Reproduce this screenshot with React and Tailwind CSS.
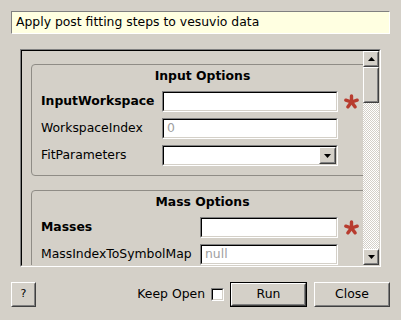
import React from "react";

const Sunken = ({ className = "", children }) => (
  <div className={`border border-t-[#808080] border-l-[#808080] border-b-white border-r-white ${className}`}>
    <div className="h-full border border-t-[#000] border-l-[#000] border-b-[#d4d0c8] border-r-[#d4d0c8] bg-white flex items-center">
      {children}
    </div>
  </div>
);

const Raised = ({ className = "", children }) => (
  <div className={`border border-t-white border-l-white border-b-[#404040] border-r-[#404040] ${className}`}>
    <div className="h-full border border-t-[#d4d0c8] border-l-[#d4d0c8] border-b-[#808080] border-r-[#808080] bg-[#d4d0c8] flex items-center justify-center">
      {children}
    </div>
  </div>
);

const Arrow = ({ up }) => (
  <svg width="7" height="4" viewBox="0 0 7 4">
    <path d={up ? "M0 4 L3.5 0 L7 4 Z" : "M0 0 L7 0 L3.5 4 Z"} fill="#000" />
  </svg>
);

const Required = () => (
  <svg width="17" height="15" viewBox="0 0 17 15" className="ml-[5px] shrink-0">
    <g stroke="#b83c2f" strokeWidth="3.4" strokeLinecap="round">
      <line x1="8.5" y1="8" x2="8.5" y2="2" />
      <line x1="8.5" y1="8" x2="14.2" y2="6.15" />
      <line x1="8.5" y1="8" x2="12" y2="12.85" />
      <line x1="8.5" y1="8" x2="5" y2="12.85" />
      <line x1="8.5" y1="8" x2="2.8" y2="6.15" />
    </g>
  </svg>
);

const Row = ({ label, bold, labelW, inputW, placeholder, combo, required }) => (
  <div className="flex items-center h-[21px]">
    <div className={`shrink-0 ${labelW} ${bold ? "font-bold" : ""}`}>{label}</div>
    {combo ? (
      <Sunken className={`${inputW} h-[21px] shrink-0`}>
        <div className="flex-1" />
        <Raised className="w-[17px] h-full">
          <Arrow />
        </Raised>
      </Sunken>
    ) : (
      <Sunken className={`${inputW} h-[21px] shrink-0`}>
        <span className="pl-[3px] text-[#a0a0a0]">{placeholder}</span>
      </Sunken>
    )}
    {required && <Required />}
  </div>
);

const Group = ({ title, children }) => (
  <div className="w-[343px] shrink-0 border border-[#8f8c86] rounded-[4px] pt-[4px] pb-[9px]">
    <div className="text-center font-bold leading-[14px]">{title}</div>
    <div className="mt-[8px] pl-[9px] flex flex-col gap-[6px]">{children}</div>
  </div>
);

export default function App() {
  return (
    <div className="w-[401px] h-[320px] bg-[#d4d0c8] flex flex-col px-[11px] pt-[11px] text-[12.4px] text-black font-['DejaVu_Sans',sans-serif] overflow-hidden">
      <div className="h-[23px] border border-t-[#808080] border-l-[#808080] border-b-white border-r-white bg-[#ffffe1] px-[4px] flex items-center">
        Apply post fitting steps to vesuvio data
      </div>

      <div className="mt-[15px] ml-[9px] w-[361px] h-[218px] border border-t-[#808080] border-l-[#808080] border-b-white border-r-white">
        <div className="h-full flex border border-t-[#000] border-l-[#000] border-b-[#d4d0c8] border-r-[#d4d0c8]">
          <div className="flex-1 overflow-hidden pl-[9px] pt-[13px] flex flex-col gap-[14px]">
            <Group title="Input Options">
              <Row label="InputWorkspace" bold labelW="w-[121px]" inputW="w-[176px]" required />
              <Row label="WorkspaceIndex" labelW="w-[121px]" inputW="w-[176px]" placeholder="0" />
              <Row label="FitParameters" labelW="w-[121px]" inputW="w-[176px]" combo />
            </Group>
            <Group title="Mass Options">
              <Row label="Masses" bold labelW="w-[159px]" inputW="w-[138px]" required />
              <Row label="MassIndexToSymbolMap" labelW="w-[159px]" inputW="w-[138px]" placeholder="null" />
            </Group>
          </div>
          <div className="w-[16px] shrink-0 flex flex-col">
            <Raised className="h-[16px]">
              <Arrow up />
            </Raised>
            <Raised className="h-[36px]" />
            <div className="flex-1 bg-[repeating-conic-gradient(#ffffff_0%_25%,#d4d0c8_0%_50%)] bg-[length:2px_2px]" />
            <Raised className="h-[16px]">
              <Arrow />
            </Raised>
          </div>
        </div>
      </div>

      <div className="mt-[15px] flex items-center h-[25px]">
        <Raised className="w-[25px] h-[25px]">
          <span className="text-[11px]">?</span>
        </Raised>
        <div className="flex-1" />
        <span>Keep Open</span>
        <Sunken className="ml-[6px] w-[13px] h-[13px]" />
        <div className="ml-[6px] w-[77px] h-[25px] border border-black">
          <Raised className="h-full">Run</Raised>
        </div>
        <Raised className="ml-[7px] w-[76px] h-[25px]">Close</Raised>
      </div>
    </div>
  );
}
